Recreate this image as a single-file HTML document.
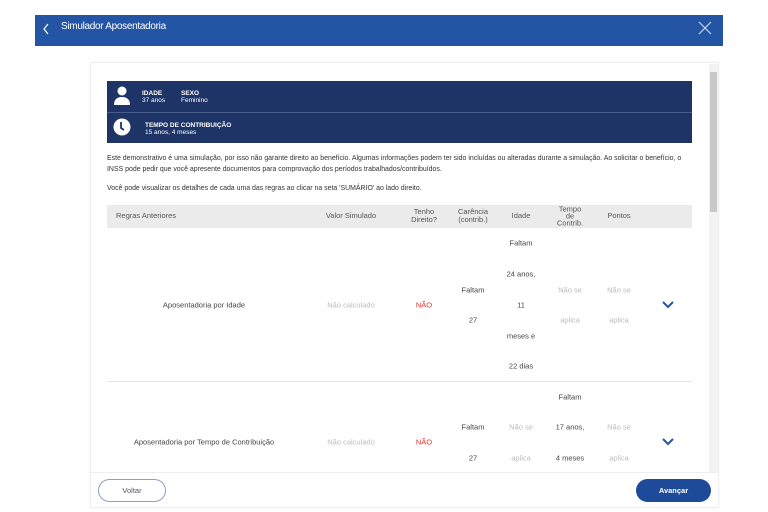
<!DOCTYPE html>
<html><head><meta charset="utf-8"><style>
*{margin:0;padding:0;box-sizing:border-box}
body{width:768px;height:512px;background:#fff;position:relative;overflow:hidden;font-family:"Liberation Sans",sans-serif}
.a{position:absolute}
.c{position:absolute;transform:translate(-50%,-50%);white-space:nowrap;font-size:7.5px;color:#444;text-align:center;line-height:1}
.g{color:#bbb}
.r{color:#d33}
.h{color:#555;font-size:7.5px;line-height:1.05}
</style></head><body>
<div class="a" style="left:35px;top:15px;width:688px;height:31px;background:#2455a5"></div>
<svg class="a" style="left:42px;top:22px" width="8" height="14"><path d="M6 2 L2 7 L6 12" stroke="#fff" stroke-width="1.2" fill="none"/></svg>
<div class="a" style="left:61px;top:21px;color:#fff;font-size:10px;letter-spacing:-0.3px">Simulador Aposentadoria</div>
<svg class="a" style="left:698px;top:21px" width="14" height="14"><path d="M1 1L13 13M13 1L1 13" stroke="#cfe0ff" stroke-width="1.1"/></svg>

<div class="a" style="left:90px;top:62px;width:629px;height:446px;border:1px solid #f0f0f0;box-shadow:0 0 3px rgba(0,0,0,0.06)"></div>
<div class="a" style="left:709px;top:64px;width:9px;height:408px;background:#f2f2f2"></div>
<div class="a" style="left:710px;top:72px;width:7px;height:140px;background:#c8c8c8"></div>
<div class="a" style="left:90px;top:472px;width:629px;height:1px;background:#eee"></div>

<div class="a" style="left:107px;top:81px;width:585px;height:62px;background:#1e3366"></div>
<div class="a" style="left:107px;top:112px;width:585px;height:1px;background:#4a5d8a"></div>
<svg class="a" style="left:113px;top:86px" width="18" height="20"><circle cx="9" cy="5" r="4.5" fill="#fff"/><path d="M1 19 Q1 11 9 11 Q17 11 17 19Z" fill="#fff"/></svg>
<div class="a" style="left:142px;top:90px;color:#fff;font-size:6.5px;line-height:7px"><b>IDADE</b><br>37 anos</div>
<div class="a" style="left:181px;top:90px;color:#fff;font-size:6.5px;line-height:7px"><b>SEXO</b><br>Feminino</div>
<svg class="a" style="left:113px;top:118px" width="18" height="18"><circle cx="9" cy="9" r="8.5" fill="#fff"/><path d="M8 4V10L11 12" stroke="#1e3366" stroke-width="1.8" fill="none"/></svg>
<div class="a" style="left:145px;top:122px;color:#fff;font-size:6.5px;line-height:7px"><b>TEMPO DE CONTRIBUIÇÃO</b><br>15 anos, 4 meses</div>

<div class="a" style="left:107px;top:154px;white-space:nowrap;font-size:6.95px;line-height:10.5px;color:#333">Este demonstrativo é uma simulação, por isso não garante direito ao benefício. Algumas informações podem ter sido incluídas ou alteradas durante a simulação. Ao solicitar o benefício, o<br>INSS pode pedir que você apresente documentos para comprovação dos períodos trabalhados/contribuídos.</div>
<div class="a" style="left:107px;top:185px;font-size:6.95px;color:#333;white-space:nowrap">Você pode visualizar os detalhes de cada uma das regras ao clicar na seta 'SUMÁRIO' ao lado direito.</div>

<div class="a" style="left:107px;top:205px;width:585px;height:23px;background:#ebebeb"></div>
<div class="a h" style="left:116px;top:212px">Regras Anteriores</div>
<div class="c h" style="left:351px;top:216px">Valor Simulado</div>
<div class="c h" style="left:424px;top:216px">Tenho<br>Direito?</div>
<div class="c h" style="left:473px;top:216px">Carência<br>(contrib.)</div>
<div class="c h" style="left:521px;top:216px">Idade</div>
<div class="c h" style="left:570px;top:216px;line-height:0.95">Tempo<br>de<br>Contrib.</div>
<div class="c h" style="left:619px;top:216px">Pontos</div>

<div class="c" style="left:204px;top:305px">Aposentadoria por Idade</div>
<div class="c g" style="left:351px;top:305px">Não calculado</div>
<div class="c r" style="left:424px;top:305px">NÃO</div>
<div class="c" style="left:473px;top:290px">Faltam</div>
<div class="c" style="left:473px;top:320px">27</div>
<div class="c" style="left:521px;top:243px">Faltam</div>
<div class="c" style="left:521px;top:274px">24 anos,</div>
<div class="c" style="left:521px;top:305px">11</div>
<div class="c" style="left:521px;top:336px">meses e</div>
<div class="c" style="left:521px;top:366px">22 dias</div>
<div class="c g" style="left:570px;top:290px">Não se</div>
<div class="c g" style="left:570px;top:320px">aplica</div>
<div class="c g" style="left:619px;top:290px">Não se</div>
<div class="c g" style="left:619px;top:320px">aplica</div>
<svg class="a" style="left:662px;top:301px" width="12" height="8"><path d="M1 1L6 6L11 1" stroke="#2455a5" stroke-width="2" fill="none"/></svg>
<div class="a" style="left:107px;top:381px;width:585px;height:1px;background:#e6e6e6"></div>

<div class="c" style="left:204px;top:442px">Aposentadoria por Tempo de Contribuição</div>
<div class="c g" style="left:351px;top:442px">Não calculado</div>
<div class="c r" style="left:424px;top:442px">NÃO</div>
<div class="c" style="left:473px;top:427px">Faltam</div>
<div class="c" style="left:473px;top:458px">27</div>
<div class="c g" style="left:521px;top:427px">Não se</div>
<div class="c g" style="left:521px;top:458px">aplica</div>
<div class="c" style="left:570px;top:397px">Faltam</div>
<div class="c" style="left:570px;top:427px">17 anos,</div>
<div class="c" style="left:570px;top:458px">4 meses</div>
<div class="c g" style="left:619px;top:427px">Não se</div>
<div class="c g" style="left:619px;top:458px">aplica</div>
<svg class="a" style="left:662px;top:438px" width="12" height="8"><path d="M1 1L6 6L11 1" stroke="#2455a5" stroke-width="2" fill="none"/></svg>

<div class="a" style="left:98px;top:479px;width:68px;height:23px;border:1px solid #8da0c4;border-radius:12px;font-size:7.5px;color:#556;text-align:center;line-height:21px">Voltar</div>
<div class="a" style="left:636px;top:479px;width:75px;height:23px;background:#1e4a9a;border-radius:12px;font-size:7.5px;color:#fff;font-weight:bold;text-align:center;line-height:23px">Avançar</div>
</body></html>
